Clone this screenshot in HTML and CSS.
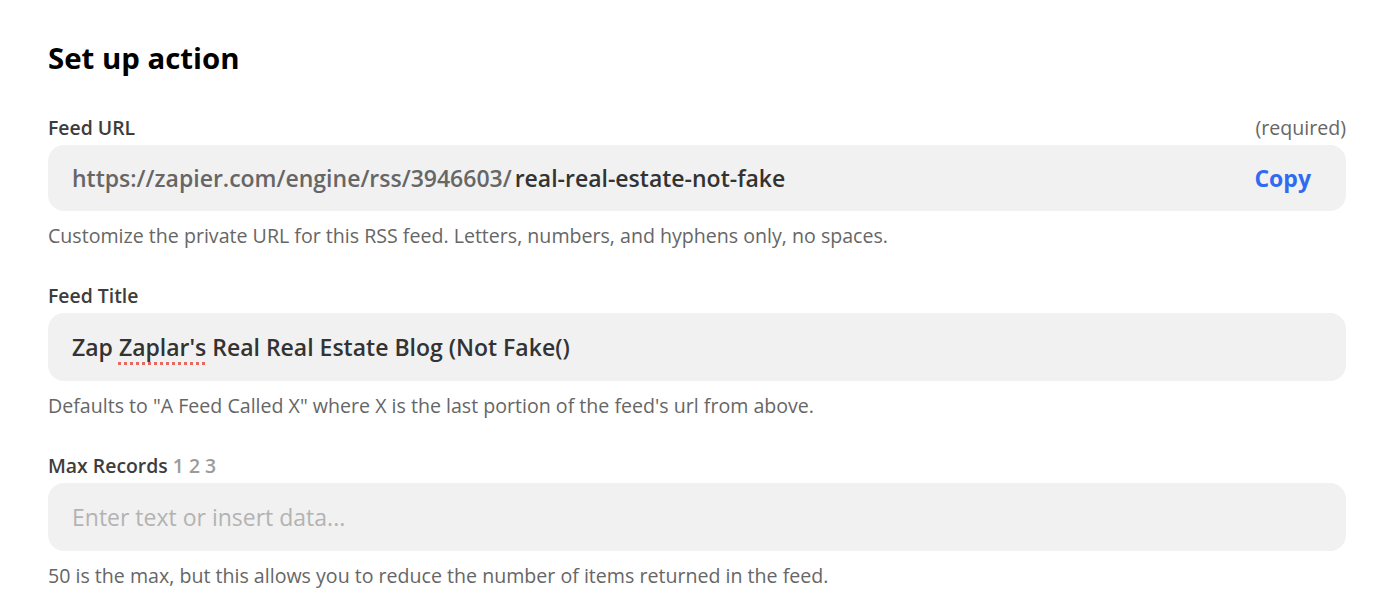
FILE: index.html
```html
<!DOCTYPE html>
<html>
<head>
<meta charset="utf-8">
<link rel="stylesheet" href="styles.css">
</head>
<body>
<div class="page">
  <h1 class="title">Set up action</h1>

  <div class="field">
    <div class="label-row">
      <span class="label">Feed URL</span>
      <span class="required">(required)</span>
    </div>
    <div class="input input-url">
      <span class="url"><span class="prefix">https://zapier.com/engine/rss/3946603/</span><span class="slug">real-real-estate-not-fake</span></span>
      <span class="copy">Copy</span>
    </div>
    <div class="help">Customize the private URL for this RSS feed. Letters, numbers, and hyphens only, no spaces.</div>
  </div>

  <div class="field">
    <div class="label-row">
      <span class="label">Feed Title</span>
    </div>
    <div class="input input-tall">
      <span class="value">Zap <span class="spell">Zaplar's</span> Real Real Estate Blog (Not Fake()</span>
    </div>
    <div class="help">Defaults to "A Feed Called X" where X is the last portion of the feed's url from above.</div>
  </div>

  <div class="field">
    <div class="label-row">
      <span class="label">Max Records <span class="nums">1 2 3</span></span>
    </div>
    <div class="input input-tall">
      <span class="placeholder">Enter text or insert data...</span>
    </div>
    <div class="help">50 is the max, but this allows you to reduce the number of items returned in the feed.</div>
  </div>
</div>
</body>
</html>
```

FILE: styles.css
```css
html, body {
  margin: 0;
  padding: 0;
  background: #ffffff;
}
body {
  font-family: "Open Sans", "Noto Sans", sans-serif;
  color: #2d2e2e;
}
.page {
  padding: 38px 54px 0 48px;
}
.title {
  margin: 0 0 36px 0;
  font-size: 29.4px;
  font-weight: 700;
  line-height: 40px;
  color: #000000;
}
.field {
  margin-bottom: 34px;
}
.label-row {
  display: flex;
  justify-content: space-between;
  align-items: baseline;
  height: 24px;
  margin-bottom: 7px;
}
.label {
  font-size: 19.4px;
  font-weight: 600;
  color: #3d3d3d;
}
.nums {
  color: #9b9b9b;
}
.required {
  font-size: 19.6px;
  color: #666666;
}
.input {
  display: flex;
  align-items: center;
  justify-content: space-between;
  background: #f1f1f1;
  border-radius: 16px;
  height: 66px;
  padding: 0 35px 0 24px;
  box-sizing: border-box;
}
.input-tall {
  height: 68px;
}
.url {
  font-size: 23px;
  font-weight: 600;
}
.prefix {
  color: #666666;
}
.slug {
  color: #333333;
  margin-left: 3px;
}
.copy {
  font-size: 23px;
  font-weight: 700;
  color: #2f6bf0;
}
.value {
  font-size: 23px;
  font-weight: 600;
  color: #333333;
}
.spell {
  text-decoration: underline dotted #e8685f;
  text-decoration-thickness: 3px;
  text-underline-offset: 6px;
}
.placeholder {
  font-size: 23px;
  color: #b3b3b3;
}
.help {
  margin-top: 13px;
  font-size: 19.6px;
  line-height: 24px;
  color: #666666;
}
```
